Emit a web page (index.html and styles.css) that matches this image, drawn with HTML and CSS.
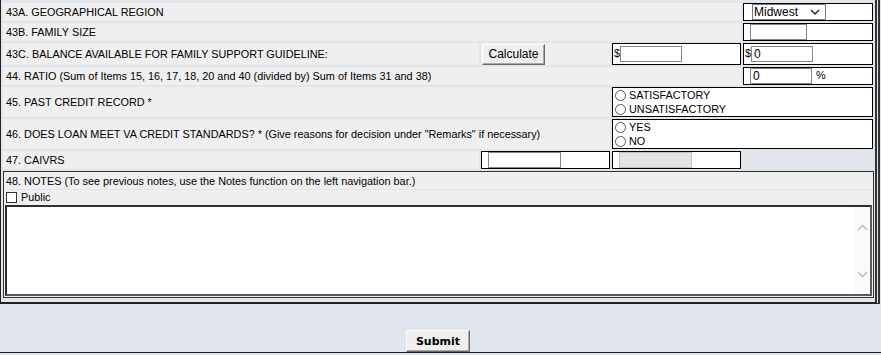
FILE: index.html
```html
<!DOCTYPE html>
<html lang="en">
<head>
    <meta charset="UTF-8">
    <title>Loan Analysis - Family Support</title>
    <link rel="stylesheet" href="styles.css">
</head>
<body>
    <div class="frame">
        <table class="grid">
            <colgroup>
                <col class="c1"><col class="c2"><col class="c3"><col class="c4">
            </colgroup>
            <tr class="h18">
                <td class="label" colspan="3">43A. GEOGRAPHICAL REGION</td>
                <td class="box pad-sel">
                    <span class="select-wrap">
                        <select class="region"><option>Midwest</option><option>Northeast</option><option>South</option><option>West</option></select>
                        <svg class="chev" width="10" height="6" viewBox="0 0 10 6"><path d="M1 1 L5 5 L9 1" fill="none" stroke="#222" stroke-width="1.4"/></svg>
                    </span>
                </td>
            </tr>
            <tr class="h18">
                <td class="label" colspan="3">43B. FAMILY SIZE</td>
                <td class="box pad-in"><input type="text" class="field w57"></td>
            </tr>
            <tr class="h22">
                <td class="label">43C. BALANCE AVAILABLE FOR FAMILY SUPPORT GUIDELINE:</td>
                <td class="label btn-cell"><button type="button" class="calc">Calculate</button></td>
                <td class="box">$<input type="text" class="field w62"></td>
                <td class="box">$<input type="text" class="field w62" value="0"></td>
            </tr>
            <tr class="h17">
                <td class="label" colspan="3">44. RATIO (Sum of Items 15, 16, 17, 18, 20 and 40 (divided by) Sum of Items 31 and 38)</td>
                <td class="box pad-in"><input type="text" class="field w62" value="0"> <span class="pct">%</span></td>
            </tr>
            <tr class="h30">
                <td class="label" colspan="2">45. PAST CREDIT RECORD *</td>
                <td class="box radios" colspan="2">
                    <label class="opt"><input type="radio" name="credit" class="radio">SATISFACTORY</label>
                    <label class="opt"><input type="radio" name="credit" class="radio">UNSATISFACTORY</label>
                </td>
            </tr>
            <tr class="h30">
                <td class="label" colspan="2">46. DOES LOAN MEET VA CREDIT STANDARDS? * (Give reasons for decision under "Remarks" if necessary)</td>
                <td class="box radios" colspan="2">
                    <label class="opt"><input type="radio" name="meets" class="radio">YES</label>
                    <label class="opt"><input type="radio" name="meets" class="radio">NO</label>
                </td>
            </tr>
            <tr class="h18">
                <td class="label">47. CAIVRS</td>
                <td class="box pad-in"><input type="text" class="field w73"></td>
                <td class="box pad-in"><input type="text" class="field w73" disabled></td>
                <td class="empty"></td>
            </tr>
        </table>

        <div class="notes">
            <div class="notes-head">48. NOTES (To see previous notes, use the Notes function on the left navigation bar.)</div>
            <div class="notes-public"><input type="checkbox" class="check" id="public"><label for="public">Public</label></div>
            <div class="notes-box">
                <textarea class="notes-text"></textarea>
                <div class="scroll">
                    <svg width="11" height="7" viewBox="0 0 11 7"><path d="M1 6 L5.5 1.5 L10 6" fill="none" stroke="#c2c2c2" stroke-width="1.6"/></svg>
                    <svg width="11" height="7" viewBox="0 0 11 7"><path d="M1 1 L5.5 5.5 L10 1" fill="none" stroke="#c2c2c2" stroke-width="1.6"/></svg>
                </div>
            </div>
        </div>
    </div>

    <div class="actions">
        <button type="submit" class="submit">Submit</button>
    </div>
    <div class="bottom-line"></div>
</body>
</html>
```

FILE: styles.css
```css
body {
    margin: 0;
    background: #e1e5ee;
    font-family: "Liberation Sans", Arial, sans-serif;
    font-size: 10.85px;
    color: #000;
}

.frame {
    width: 874px;
    padding-top: 1px;
    border-left: 1px solid #222;
    border-right: 5px double #333;
    border-bottom: 2px solid #222;
    background: #e1e5ee;
}

.grid {
    width: 874px;
    table-layout: fixed;
    border-spacing: 2px;
    border-collapse: separate;
}

.c1 { width: 476px; }
.c2 { width: 129px; }
.c3 { width: 129px; }
.c4 { width: 130px; }

.h17 { height: 17px; }
.h18 { height: 18px; }
.h22 { height: 22px; }
.h30 { height: 30px; }

.grid td {
    padding: 0 3px;
    vertical-align: middle;
    white-space: nowrap;
    overflow: hidden;
}

.label {
    background: #efefef;
}

.box {
    background: #fff;
    border: 1px solid #000;
}

.grid td.box {
    padding: 0 0 0 1px;
}

.grid td.pad-in {
    padding-left: 6px;
}

.grid td.pad-sel {
    padding-left: 8px;
}

.grid td.btn-cell {
    padding: 0 0 0 1px;
}

.empty {
    background: transparent;
}

.field {
    height: 16px;
    box-sizing: border-box;
    border: 1px solid #858585;
    padding: 0 2px;
    margin: 0;
    font-family: "Liberation Sans", Arial, sans-serif;
    font-size: 12px;
    vertical-align: middle;
    background: #fff;
}

.field:disabled {
    background: #e3e3e3;
    border-color: #c2c2c2;
}

.w57 { width: 57px; }
.w62 { width: 62px; }
.w73 { width: 73px; }

.pct {
    margin-left: 1px;
}

.select-wrap {
    position: relative;
    display: inline-block;
    vertical-align: middle;
}

.region {
    appearance: none;
    -webkit-appearance: none;
    width: 74px;
    height: 16px;
    box-sizing: border-box;
    border: 1px solid #7a7a7a;
    border-radius: 0;
    padding: 0 0 0 1px;
    margin: 0;
    background: #fff;
    font-family: "Liberation Sans", Arial, sans-serif;
    font-size: 12px;
    line-height: 14px;
    color: #000;
    display: block;
}

.chev {
    position: absolute;
    left: 58px;
    top: 5px;
}

.calc {
    width: 63px;
    height: 21px;
    box-sizing: border-box;
    margin: 0;
    padding: 0;
    font-family: "Liberation Sans", Arial, sans-serif;
    font-size: 12px;
    color: #000;
    background: #efefef;
    border: 1px solid;
    border-color: #fbfbfb #6a6a6a #6a6a6a #fbfbfb;
    box-shadow: inset -1px -1px 0 #a8a8a8;
    display: block;
}

.radios {
    vertical-align: middle;
}

.opt {
    display: flex;
    align-items: center;
    height: 14px;
}

.radio {
    appearance: none;
    -webkit-appearance: none;
    width: 11px;
    height: 11px;
    margin: 0 3px 0 1px;
    border: 1px solid #555;
    border-radius: 50%;
    background: #fff;
}

.notes {
    margin: 0 1px 4px 2px;
    border: 1px solid #333;
    padding: 1px;
    background: #efefef;
}

.notes-head {
    height: 16px;
    line-height: 16px;
    padding-left: 1px;
    border-bottom: 1px solid #dfe4ee;
    white-space: nowrap;
}

.notes-public {
    height: 14px;
    display: flex;
    align-items: center;
}

.check {
    appearance: none;
    -webkit-appearance: none;
    width: 11px;
    height: 11px;
    margin: 0 4px 0 1px;
    border: 1px solid #333;
    background: #fff;
}

.notes-box {
    position: relative;
    margin-top: 1px;
}

.notes-text {
    display: block;
    width: 100%;
    height: 91px;
    box-sizing: border-box;
    margin: 0;
    border: 2px solid;
    border-color: #2e2e2e #5a5a5a #5a5a5a #2e2e2e;
    resize: none;
    overflow: hidden;
    background: #fff;
    font-family: "Liberation Sans", Arial, sans-serif;
    font-size: 12px;
}

.scroll {
    position: absolute;
    right: 2px;
    top: 2px;
    bottom: 2px;
    width: 16px;
    background: #fafafa;
    display: flex;
    flex-direction: column;
    justify-content: space-between;
    align-items: center;
    padding: 17px 0 16px;
    box-sizing: border-box;
}

.scroll svg {
    display: block;
}

.actions {
    width: 876px;
    padding-top: 26px;
    text-align: center;
}

.submit {
    width: 64px;
    height: 22px;
    box-sizing: border-box;
    margin: 0;
    padding: 0;
    font-family: "DejaVu Sans", Verdana, sans-serif;
    font-size: 11px;
    font-weight: bold;
    color: #000;
    background: #efefef;
    border: 1px solid;
    border-color: #fbfbfb #6a6a6a #6a6a6a #fbfbfb;
    box-shadow: inset -1px -1px 0 #a8a8a8;
    vertical-align: top;
}

.bottom-line {
    border-top: 1px solid #222;
    height: 3px;
}
```
